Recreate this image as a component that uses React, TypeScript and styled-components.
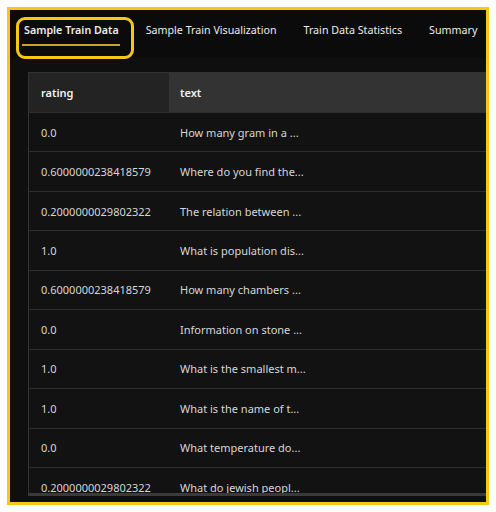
import React from "react";
import styled, { createGlobalStyle } from "styled-components";

const GlobalStyle = createGlobalStyle`
  html, body {
    margin: 0;
    padding: 0;
    background: #ffffff;
  }
  * {
    box-sizing: border-box;
  }
`;

const rows: { rating: string; text: string }[] = [
  { rating: "0.0", text: "How many gram in a ..." },
  { rating: "0.6000000238418579", text: "Where do you find the..." },
  { rating: "0.2000000029802322", text: "The relation between ..." },
  { rating: "1.0", text: "What is population dis..." },
  { rating: "0.6000000238418579", text: "How many chambers ..." },
  { rating: "0.0", text: "Information on stone ..." },
  { rating: "1.0", text: "What is the smallest m..." },
  { rating: "1.0", text: "What is the name of t..." },
  { rating: "0.0", text: "What temperature do..." },
  { rating: "0.2000000029802322", text: "What do jewish peopl..." },
];

const tabs = [
  "Sample Train Data",
  "Sample Train Visualization",
  "Train Data Statistics",
  "Summary",
];

export default function App(): JSX.Element {
  return (
    <>
      <GlobalStyle />
      <Frame>
        <TabBar>
          {tabs.map((t, i) => (
            <Tab key={t} $active={i === 0}>
              {t}
            </Tab>
          ))}
        </TabBar>
        <Content>
          <Table>
            <HeaderRow>
              <HeaderCell $shade="#232323" $width={140}>
                rating
              </HeaderCell>
              <HeaderCell $shade="#333333" $inset={11}>
                text
              </HeaderCell>
            </HeaderRow>
            {rows.map((r, i) => (
              <Row key={i}>
                <Cell $width={140}>{r.rating}</Cell>
                <Cell $inset={11}>{r.text}</Cell>
              </Row>
            ))}
          </Table>
        </Content>
      </Frame>
    </>
  );
}

const Frame = styled.div`
  margin: 7px;
  width: 482px;
  height: 498px;
  border: 3px solid #f7c815;
  background: #0b0b0b;
  display: flex;
  flex-direction: column;
  overflow: hidden;
  font-family: "Noto Sans", "Open Sans", sans-serif;
`;

const TabBar = styled.div`
  height: 48px;
  flex: none;
  display: flex;
  align-items: flex-start;
  gap: 27px;
  padding: 10px 0 0 14px;
`;

const Tab = styled.div<{ $active?: boolean }>`
  position: relative;
  white-space: nowrap;
  font-size: 10.7px;
  line-height: 20px;
  color: #ececec;
  font-weight: ${(p) => (p.$active ? 600 : 400)};

  ${(p) =>
    p.$active &&
    `
    &::before {
      content: "";
      position: absolute;
      left: -2px;
      right: -1px;
      top: 24px;
      height: 2px;
      background: #c9a227;
    }
    &::after {
      content: "";
      position: absolute;
      left: -8px;
      right: -15px;
      top: -3px;
      height: 36px;
      border: 3px solid #f7c815;
      border-radius: 9px;
    }
  `}
`;

const Content = styled.div`
  flex: 1;
  min-height: 0;
  background: #0f0f0f;
  padding: 14px 0 6px 18px;
  display: flex;
`;

const Table = styled.div`
  flex: 1;
  min-width: 0;
  overflow: hidden;
  background: #121212;
  border: 1px solid #333333;
  border-right: none;
  border-bottom: 3px solid #3a3a3a;
  font-size: 11px;
`;

const HeaderRow = styled.div`
  display: flex;
  height: 39px;
`;

const HeaderCell = styled.div<{ $shade: string; $width?: number; $inset?: number }>`
  display: flex;
  align-items: center;
  padding-left: ${(p) => p.$inset ?? 12}px;
  background: ${(p) => p.$shade};
  color: #f2f2f2;
  font-weight: 600;
  ${(p) => (p.$width ? `width: ${p.$width}px; flex: none;` : "flex: 1;")}
`;

const Row = styled.div`
  display: flex;
  height: 39.45px;
  border-top: 1px solid #2e2e2e;
  &:first-of-type {
    border-top: none;
  }
`;

const Cell = styled.div<{ $width?: number; $inset?: number }>`
  display: flex;
  align-items: center;
  padding-left: ${(p) => p.$inset ?? 12}px;
  color: #d6d6d6;
  white-space: nowrap;
  ${(p) => (p.$width ? `width: ${p.$width}px; flex: none;` : "flex: 1;")}
`;
